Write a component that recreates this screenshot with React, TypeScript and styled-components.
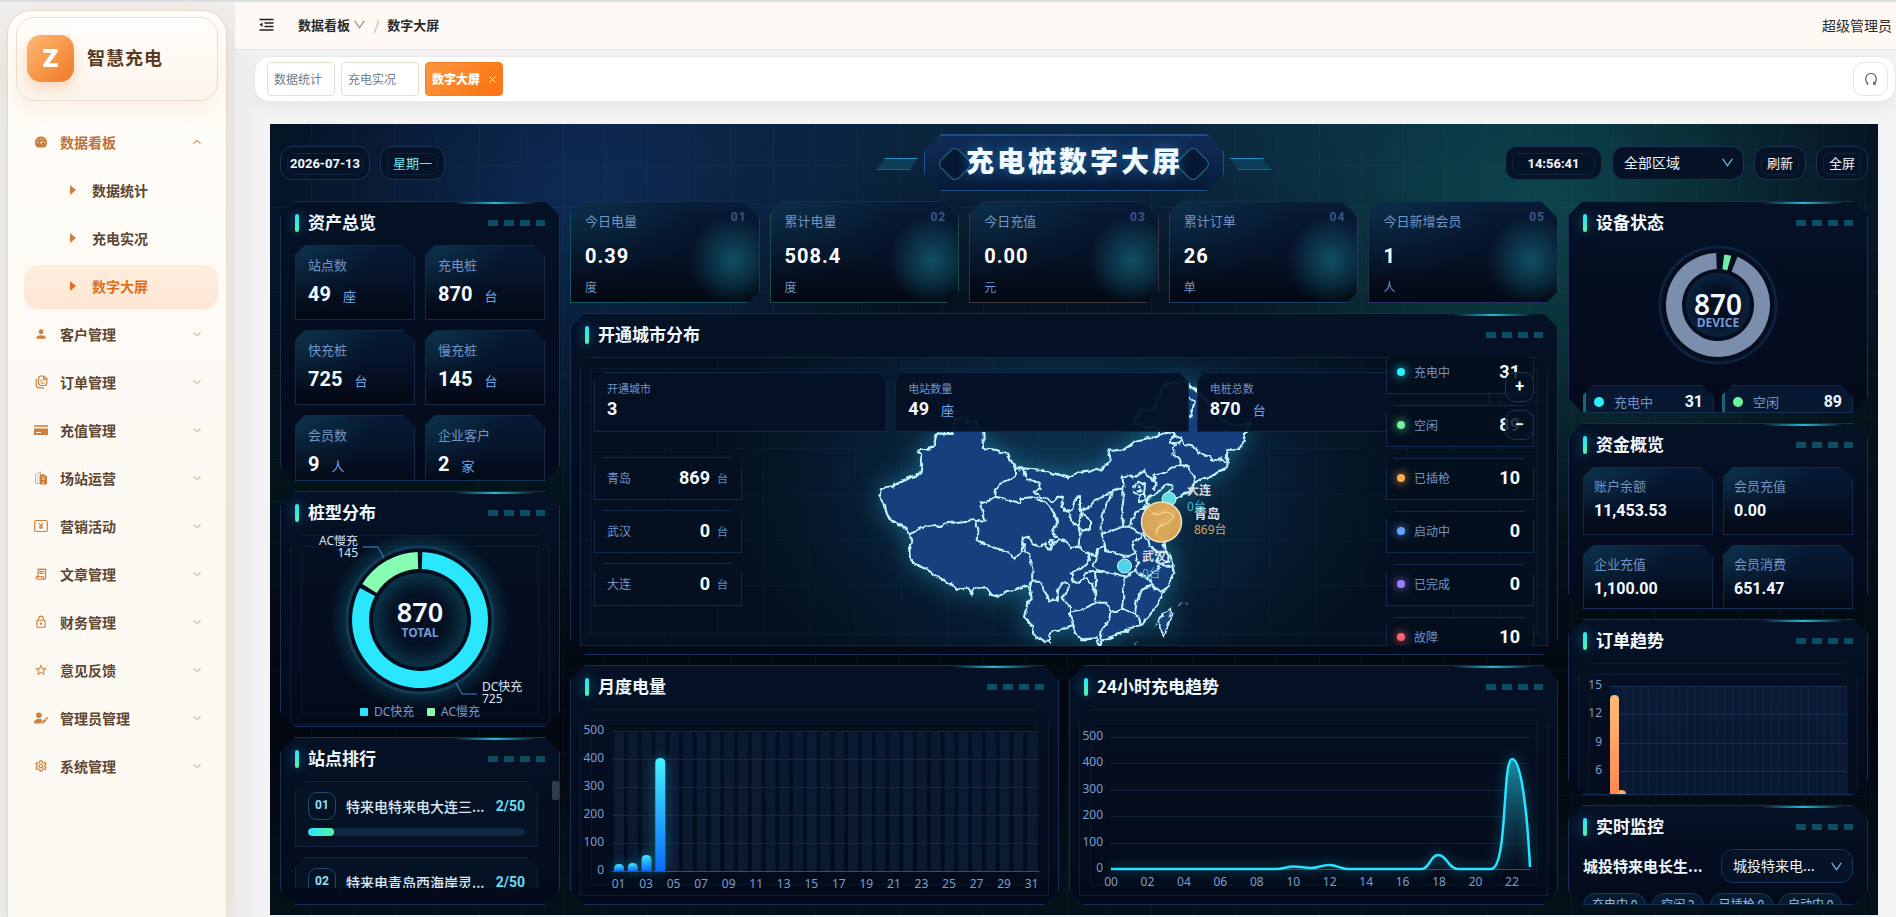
import React from "react";
import styled, { createGlobalStyle, css } from "styled-components";
import { AiFillDashboard } from "react-icons/ai";
import { MdPerson, MdOutlineReceiptLong, MdOutlineLock, MdStarBorder, MdOutlineSettings } from "react-icons/md";
import { FaUserPen } from "react-icons/fa6";

const cjk = `"Noto Sans CJK SC", sans-serif`;
const uiFont = `"Noto Sans", ${cjk}`;
const numFont = `Roboto, ${cjk}`;

const GlobalStyle = createGlobalStyle`
  * { box-sizing: border-box; }
  body { margin: 0; background: #f3f3f3; font-family: ${cjk}; font-size: 14px; }
  button, select { font: inherit; color: inherit; margin: 0; }
  h1, h2, ul, dl, dd, dt { margin: 0; padding: 0; }
  ul { list-style: none; }
  a { color: inherit; text-decoration: none; }
  svg { display: block; }
`;

/* ---------- shell ---------- */

const Shell = styled.div`
  display: flex;
  height: 100vh;
  min-height: 640px;
  overflow: hidden;
  border-top: 2px solid #dcdfdf;
`;

const Sidebar = styled.aside`
  flex: none;
  width: 235px;
  padding: 8px 8px 0 7px;
  background: linear-gradient(90deg, #f1f0ef, #f0eeec);
`;

const SideCard = styled.div`
  height: 100%;
  padding: 6px 8px 0;
  border: 1px solid #ead9c8;
  border-bottom: 0;
  border-radius: 24px 24px 0 0;
  background: linear-gradient(180deg, #fffdfa, #fcf8f2 60%);
  box-shadow: 0 12px 32px rgba(130, 90, 60, 0.14);
`;

const Brand = styled.div`
  display: flex;
  align-items: flex-start;
  gap: 13px;
  height: 84px;
  padding: 17px 10px;
  border: 1px solid #ecdccc;
  border-radius: 18px;
  background: linear-gradient(180deg, #fffdfb, #fbf5ec);
  box-shadow: 0 12px 24px rgba(240, 160, 100, 0.12);
`;

const BrandMark = styled.span`
  display: grid;
  place-items: center;
  width: 47px;
  height: 47px;
  border-radius: 14px;
  color: #fff;
  font: 900 24px/48px Inter, sans-serif;
  background: linear-gradient(135deg, #ffb873, #ee7a26);
  box-shadow: 0 6px 14px rgba(240, 130, 50, 0.28);
`;

const BrandName = styled.span`
  margin-top: 8px;
  color: #5b3a21;
  font-size: 18px;
  font-weight: 700;
  line-height: 28px;
  letter-spacing: 1px;
`;

const Menu = styled.nav`
  display: flex;
  flex-direction: column;
  gap: 4px;
  margin-top: 20px;
  padding-left: 8px;
`;

const MenuItem = styled.button<{ $open?: boolean }>`
  display: flex;
  align-items: center;
  gap: 12px;
  height: 44px;
  padding: 0 17px 2px 10px;
  border: 0;
  background: none;
  color: ${(p) => (p.$open ? "#bb7440" : "#5c4634")};
  font-weight: 600;
  line-height: 20px;
  text-align: left;
  > svg { flex: none; width: 14px; height: 14px; color: #cd7f3c; }
  > svg:last-child { width: 8px; height: 8px; margin-left: auto; color: ${(p) => (p.$open ? "#c98a5a" : "#d4b294")}; }
`;

const SubLink = styled.a<{ $active?: boolean }>`
  display: flex;
  align-items: center;
  gap: 16px;
  height: 44px;
  padding: 0 0 2px 46px;
  border-radius: 14px;
  color: ${(p) => (p.$active ? "#df6f1c" : "#5c4634")};
  font-weight: 600;
  line-height: 20px;
  background: ${(p) => (p.$active ? "linear-gradient(180deg, #ffeede, #fde6d3)" : "none")};
  &::before {
    content: "";
    border: 5px solid transparent;
    border-left: 6px solid ${(p) => (p.$active ? "#df6f1c" : "#cd7f3c")};
    border-right: 0;
  }
`;

const Main = styled.div`
  flex: 1;
  min-width: 0;
  display: flex;
  flex-direction: column;
  background: linear-gradient(90deg, #ececec, #f3f3f3 28px);
`;

const TopBar = styled.header`
  display: flex;
  align-items: center;
  height: 48px;
  padding: 0 4px 2px 24px;
  background: #fef9f5;
  border-bottom: 1px solid #e8e5e1;
  color: #2b2b2b;
`;

const IconButton = styled.button`
  display: grid;
  place-items: center;
  padding: 0;
  border: 0;
  background: none;
`;

const Crumbs = styled.nav`
  display: flex;
  align-items: center;
  margin-left: 24px;
  font-size: 13px;
  font-weight: 600;
  line-height: 20px;
  svg { margin: 0 9px 0 4px; }
  span { margin-right: 8px; color: #b9aaa0; font-weight: 400; }
`;

const UserName = styled.span`
  margin-left: auto;
  line-height: 20px;
`;

const TabBar = styled.div`
  display: flex;
  gap: 6px;
  height: 46px;
  margin: 6px 0 0 19px;
  padding: 5px 7px 5px 12px;
  border: 1px solid #ece9e5;
  border-radius: 16px;
  background: #fff;
  box-shadow: 0 6px 14px rgba(0, 0, 0, 0.05);
`;

const Tab = styled.div<{ $active?: boolean; $wide?: boolean }>`
  display: flex;
  align-items: center;
  height: 34px;
  width: ${(p) => (p.$wide ? 78 : 68)}px;
  padding: 0 6px;
  border: 1px solid ${(p) => (p.$active ? "#fb7c20" : "#eaddd2")};
  border-radius: 4px;
  color: ${(p) => (p.$active ? "#fff" : "#6f7c8c")};
  font-size: 12px;
  font-weight: ${(p) => (p.$active ? 900 : 400)};
  line-height: 18px;
  background: ${(p) => (p.$active ? "linear-gradient(135deg, #ff963f, #fa7210)" : "#fff")};
  button { margin-left: auto; }
`;

const RefreshButton = styled(IconButton)`
  width: 35px;
  height: 34px;
  margin-left: auto;
  border: 1px solid #ebe5de;
  border-radius: 10px;
  color: #59616c;
`;

/* ---------- data screen ---------- */

const Screen = styled.main`
  flex: 1;
  min-height: 0;
  display: flex;
  flex-direction: column;
  gap: 10px;
  margin: 22px 18px 2px 35px;
  padding: 10px;
  color: #eaf6ff;
  background:
    repeating-linear-gradient(90deg, transparent 0 41px, rgba(90, 160, 220, 0.05) 41px 42px),
    repeating-linear-gradient(180deg, transparent 0 41px, rgba(90, 160, 220, 0.04) 41px 42px),
    radial-gradient(ellipse 360px 300px at 19% 10%, rgba(18, 56, 116, 0.6), transparent),
    radial-gradient(ellipse 380px 330px at 79% 11%, rgba(16, 90, 92, 0.7), transparent),
    radial-gradient(ellipse 700px 190px at 50% 0%, rgba(16, 60, 96, 0.6), transparent),
    linear-gradient(180deg, #05101f, #04131a 45%, #02060f 75%, #03121a);
`;

const ScreenHead = styled.header`
  display: grid;
  grid-template-columns: 1fr auto 1fr;
  align-items: center;
  height: 57px;
`;

const PillRow = styled.div<{ $end?: boolean }>`
  display: flex;
  gap: 10px;
  justify-content: ${(p) => (p.$end ? "flex-end" : "flex-start")};
`;

const pillBox = css`
  height: 34px;
  border: 1px solid #1a335c;
  border-radius: 12px;
  background: #061225;
`;

const Pill = styled.span<{ $w: number; $accent?: boolean }>`
  ${pillBox}
  width: ${(p) => p.$w}px;
  padding: 6px;
  color: ${(p) => (p.$accent ? "#6ce8f5" : "#f2f8ff")};
  font: ${(p) => (p.$accent ? 400 : 700)} 13px/16px ${numFont};
  text-align: center;
  &::before {
    content: "";
    display: block;
    height: 20px;
    margin-bottom: -19px;
    border: 1px solid rgba(40, 80, 130, 0.28);
    border-radius: 7px;
  }
`;

const PillButton = styled(Pill).attrs({ as: "button", type: "button" })`
  font-weight: 400;
`;

const SelectBox = styled.label<{ $w: number }>`
  display: grid;
  align-items: center;
  width: ${(p) => p.$w}px;
  > * { grid-area: 1 / 1; }
  > svg { justify-self: end; margin-right: 11px; pointer-events: none; color: #7fc2f2; }
`;

const Select = styled.select`
  ${pillBox}
  width: 100%;
  padding: 0 28px 2px 11px;
  appearance: none;
  color: #eaf4ff;
  font-size: 14px;
`;

const TitleWrap = styled.div`
  position: relative;
  &::before, &::after {
    content: "";
    position: absolute;
    top: 24px;
    width: 42px;
    height: 10px;
    border-top: 1px solid #2a8fc0;
    border-bottom: 1px solid #1a5f78;
    background: #0c3c56;
  }
  &::before { left: -48px; clip-path: polygon(9px 0, 100% 0, 34px 100%, 0 100%); }
  &::after { right: -48px; clip-path: polygon(0 0, 33px 0, 100% 100%, 8px 100%); }
`;

const Title = styled.h1`
  position: relative;
  z-index: 0;
  height: 57px;
  padding: 0 40px 0 41px;
  border: 1px solid #1f4f8c;
  border-top: 2px solid #234a80;
  clip-path: polygon(17px 0, calc(100% - 17px) 0, 100% 17px, 100% calc(100% - 17px), calc(100% - 17px) 100%, 17px 100%, 0 calc(100% - 17px), 0 17px);
  background: linear-gradient(180deg, #112c56, #0a2246 60%, #081a38);
  color: #f1f8ff;
  font-size: 28px;
  font-weight: 900;
  line-height: 48px;
  letter-spacing: 3px;
  text-shadow: 0 0 14px rgba(40, 160, 230, 0.6);
  &::before, &::after {
    content: "";
    position: absolute;
    z-index: -1;
    top: 15px;
    width: 24px;
    height: 24px;
    border: 1px solid #236f90;
    border-radius: 6px;
    background: #061832;
    transform: rotate(45deg);
  }
  &::before { left: 17px; }
  &::after { right: 17px; }
`;

const Board = styled.div`
  flex: 1;
  min-height: 0;
  display: grid;
  grid-template-columns: 280px minmax(0, 1fr) 300px;
  gap: 10px;
`;

const Column = styled.div<{ $rows: string }>`
  display: grid;
  grid-template-columns: minmax(0, 1fr);
  grid-template-rows: ${(p) => p.$rows};
  gap: 10px;
  min-height: 0;
`;

const Pair = styled.div`
  display: grid;
  grid-template-columns: 1fr 1fr;
  gap: 10px;
  min-height: 0;
`;

const PanelBox = styled.section`
  position: relative;
  display: flex;
  flex-direction: column;
  min-width: 0;
  min-height: 0;
  padding: 12px 14px 8px;
  overflow: hidden;
  border: 1px solid #182f55;
  clip-path: polygon(15px 0, calc(100% - 15px) 0, 100% 15px, 100% calc(100% - 15px), calc(100% - 15px) 100%, 15px 100%, 0 calc(100% - 15px), 0 15px);
  background: linear-gradient(180deg, #051226, #040d20 50%, #030a1a);
  &::before {
    content: "";
    position: absolute;
    top: 0;
    right: 23px;
    width: 82px;
    height: 2px;
    background: linear-gradient(90deg, transparent, #26b8d4, transparent);
  }
`;

const PanelHead = styled.div`
  flex: none;
  display: flex;
  align-items: center;
  height: 18px;
  margin-bottom: 13px;
  &::before {
    content: "";
    width: 4px;
    height: 18px;
    margin-right: 9px;
    border-radius: 2px;
    background: linear-gradient(180deg, #27e3ff, #55f5a6);
    box-shadow: 0 0 12px rgba(39, 190, 255, 0.6);
  }
  &::after {
    content: "";
    width: 57px;
    height: 6px;
    margin-left: auto;
    background: repeating-linear-gradient(90deg, #0f4d63 0 10px, transparent 10px 16px);
  }
`;

const PanelTitle = styled.h2`
  padding-bottom: 3px;
  color: #f2f9ff;
  font-size: 17px;
  font-weight: 700;
  line-height: 18px;
`;

const cardSkin = css`
  border: 1px solid #12294a;
  clip-path: polygon(10px 0, calc(100% - 12px) 0, 100% 12px, 100% 100%, 0 100%, 0 10px);
  background:
    radial-gradient(ellipse 70% 80% at 0 0, rgba(16, 66, 88, 0.6), transparent),
    linear-gradient(180deg, #071a36, #050f22 62%, #030913);
`;

const CardGrid = styled.div<{ $row: number; $gap: number }>`
  display: grid;
  grid-template-columns: 1fr 1fr;
  grid-auto-rows: ${(p) => p.$row}px;
  gap: ${(p) => p.$gap}px;
`;

const Card = styled.div`
  ${cardSkin}
  padding: 10px 12px;
`;

const FundCard = styled(Card)`
  padding: 9px 10px;
`;

const Label = styled.div<{ $size?: number }>`
  color: #7394c4;
  font-size: ${(p) => p.$size || 13}px;
  line-height: 18px;
`;

const Value = styled.div<{ $size: number; $top: number }>`
  display: flex;
  align-items: baseline;
  gap: 12px;
  margin-top: ${(p) => p.$top}px;
  color: #f4faff;
  font: 700 ${(p) => p.$size}px/24px ${numFont};
`;

const Unit = styled.small`
  color: #6fa8e6;
  font: 400 13px/18px ${cjk};
`;

const ChartBox = styled.div<{ $h?: number }>`
  position: relative;
  flex: ${(p) => (p.$h ? "none" : "1")};
  height: ${(p) => (p.$h ? p.$h + "px" : "auto")};
  min-height: 0;
  margin: 0 -5px;
  overflow: hidden;
  box-shadow: inset 0 0 0 1px #0b1c34;
  clip-path: polygon(12px 0, calc(100% - 12px) 0, 100% 14px, 100% 100%, 0 100%, 0 12px);
  background: linear-gradient(180deg, #051023, #030b1a);
  &::before {
    content: "";
    position: absolute;
    inset: 11px;
    border: 1px solid rgba(40, 80, 120, 0.16);
  }
  > svg { position: relative; }
`;

const Chart = styled.svg`
  width: 100%;
  height: 100%;
  font: 12px ${uiFont};
  fill: #7f9dcc;
`;

/* ---------- KPI strip ---------- */

const KpiRow = styled.div`
  display: grid;
  grid-template-columns: repeat(5, 1fr);
  grid-template-rows: minmax(0, 1fr);
  gap: 10px;
  min-height: 0;
`;

const Kpi = styled.div<{ $c: string; $glow: string }>`
  position: relative;
  padding: 10px 14px 0;
  border: 1px solid ${(p) => p.$c};
  border-top-color: #14304a;
  clip-path: polygon(13px 0, calc(100% - 17px) 0, 100% 17px, 100% calc(100% - 12px), calc(100% - 12px) 100%, 0 100%, 0 13px);
  background:
    radial-gradient(circle 44px at calc(100% - 26px) 58px, ${(p) => p.$glow}, transparent),
    radial-gradient(ellipse 70% 80% at 0 0, rgba(16, 66, 88, 0.5), transparent),
    linear-gradient(180deg, #081b38, #051024 60%, #030913);
`;

const KpiIndex = styled.span`
  position: absolute;
  top: 6px;
  right: 12px;
  color: #3b5780;
  font: 700 12px/18px ${numFont};
  letter-spacing: 1px;
`;

const KpiValue = styled.div`
  margin: 14px 0 10px;
  color: #fff;
  font: 700 20px/24px ${numFont};
  letter-spacing: 1px;
`;

/* ---------- ranking ---------- */

const RankScroll = styled.div`
  flex: 1;
  display: flex;
  justify-content: space-between;
  min-height: 0;
  margin: 0 -14px 8px 0;
  overflow: hidden;
`;

const RankList = styled.ul`
  flex: none;
  display: grid;
  gap: 10px;
  width: calc(100% - 21px);
  grid-auto-rows: 66px;
`;

const Thumb = styled.span`
  width: 7px;
  height: 19px;
  border-radius: 2px;
  background: #343b48;
`;

const RankItem = styled.li`
  padding: 10px 12px;
  border: 1px solid #0e2340;
  clip-path: polygon(10px 0, calc(100% - 11px) 0, 100% 11px, 100% 100%, 0 100%, 0 10px);
  background: #051224;
`;

const RankLine = styled.div`
  display: flex;
  align-items: center;
  margin-bottom: 8px;
  font-weight: 500;
  line-height: 26px;
  color: #dfeaf8;
`;

const Badge = styled.span`
  width: 28px;
  height: 28px;
  margin-right: 10px;
  border: 1px solid #174a6c;
  border-radius: 9px;
  color: #8fe3f5;
  font: 700 12px/24px ${numFont};
  text-align: center;
`;

const Ratio = styled.span`
  margin-left: auto;
  color: #66dcf0;
  font: 700 14px/26px ${numFont};
`;

const Track = styled.div`
  height: 8px;
  border-radius: 4px;
  background: #10283f;
  overflow: hidden;
`;

const Fill = styled.div`
  height: 100%;
  border-radius: 4px;
  background: linear-gradient(90deg, #27e3ff, #55f5a6);
`;

/* ---------- map ---------- */

const Stage = styled(ChartBox)`
  box-shadow: inset 0 0 0 1px #102744;
  background:
    repeating-linear-gradient(90deg, transparent 0 45px, rgba(80, 150, 220, 0.04) 45px 46px),
    repeating-linear-gradient(180deg, transparent 0 45px, rgba(80, 150, 220, 0.04) 45px 46px),
    radial-gradient(ellipse 340px 250px at 50% 40%, rgba(16, 68, 106, 0.65), transparent),
    #04101f;
`;

const MapSvg = styled(Chart)`
  position: absolute !important;
  inset: 0;
`;

const StageStats = styled.div`
  position: absolute;
  top: 15px;
  left: 14px;
  right: 58px;
  display: grid;
  grid-template-columns: repeat(3, 1fr);
  gap: 8px;
`;

const glass = css`
  border: 1px solid #11294a;
  clip-path: polygon(9px 0, calc(100% - 10px) 0, 100% 10px, 100% 100%, 0 100%, 0 9px);
`;

const StageStat = styled.div`
  ${glass}
  height: 60px;
  padding: 6px 12px;
  background: rgba(5, 17, 37, 0.95);
`;

const CityList = styled.ul`
  position: absolute;
  top: 100px;
  left: 14px;
  display: grid;
  grid-auto-rows: 43px;
  gap: 10px;
  width: 148px;
`;

const CityRow = styled.li`
  ${glass}
  display: flex;
  align-items: center;
  gap: 7px;
  padding: 0 13px 2px 12px;
  background: #041020;
  b { margin-left: auto; font: 700 18px/24px ${numFont}; color: #f4faff; }
  small { color: #5f8fca; font-size: 11px; line-height: 18px; }
`;

const StateList = styled.ul`
  position: absolute;
  top: -5px;
  right: 14px;
  display: grid;
  grid-auto-rows: 42px;
  gap: 11px;
  width: 148px;
`;

const StateRow = styled(CityRow)`
  gap: 9px;
  padding-left: 10px;
  background: #040f1e;
`;

const Dot = styled.i<{ $c: string }>`
  width: 8px;
  height: 8px;
  border-radius: 50%;
  background: ${(p) => p.$c};
  box-shadow: 0 0 10px ${(p) => p.$c};
`;

const Zoomer = styled.div`
  position: absolute;
  top: 15px;
  right: 14px;
  display: grid;
  gap: 8px;
`;

const ZoomButton = styled.button`
  width: 29px;
  height: 30px;
  padding: 0;
  border: 1px solid #1a3558;
  border-radius: 10px;
  background: rgba(5, 17, 35, 0.86);
  color: #f4faff;
  font: 700 16px/28px ${numFont};
`;

/* ---------- right column ---------- */

const DonutArea = styled.div`
  flex: none;
  height: 130px;
  margin-bottom: 10px;
`;

const DeviceCard = styled(Card)`
  display: flex;
  align-items: center;
  gap: 10px;
  padding: 0 10px 2px 8px;
  border-left: 3px solid #18647a;
  background: #071830;
  b { margin-left: auto; font: 700 16px/20px ${numFont}; }
`;

const BigDot = styled(Dot)`
  width: 10px;
  height: 10px;
  box-shadow: none;
`;

const MonitorRow = styled.div`
  flex: none;
  display: flex;
  align-items: center;
  justify-content: space-between;
  margin-bottom: 10px;
  font-size: 15px;
  line-height: 20px;
`;

const TagRow = styled.div`
  display: flex;
  gap: 6px;
`;

const Tag = styled.span`
  flex: none;
  height: 24px;
  padding: 0 8px;
  border: 1px solid #16395c;
  border-radius: 12px;
  background: #071a30;
  color: #8ec6ea;
  font-size: 12px;
  line-height: 20px;
`;

/* ---------- icons ---------- */

const Chevron = ({ up, size = 10 }: { up?: boolean; size?: number }) => (
  <svg width={size} height={size} viewBox="0 0 10 10" fill="none" stroke="currentColor">
    <path d={up ? "M0.5 7 5 3l4.500 4" : "M0.5 3 5 7l4.500-4"} strokeWidth="1.300" />
  </svg>
);

const DeepChevron = ({ size = 11, color = "currentColor" }: { size?: number; color?: string }) => (
  <svg width={size} height={size} viewBox="0 0 11 11" fill="none" stroke={color}>
    <path d="M0.7 1.800 5.500 8.800l4.800-7" strokeWidth="1.200" />
  </svg>
);

const DocsIcon = () => (
  <svg viewBox="0 0 14 14" fill="none" stroke="currentColor" strokeWidth="1.200">
    <path d="M4.500 4q0-3 3-3h2.500l2.800 2.800v4.200q0 2.500-2.500 2.500H7q-2.500 0-2.500-2.500z" />
    <path d="M2.200 4v6q0 2.800 2.800 2.800h5M6.500 5.700h2M6.500 8h4.200M9.500 1.500v2.800h3" />
  </svg>
);

const CardIcon = () => (
  <svg viewBox="0 0 14 14" fill="currentColor">
    <path d="M0 2h14v2H0z" opacity=".8" />
    <path d="M0 5.500h14V12H0zM2 9v1h5V9z" fillRule="evenodd" />
  </svg>
);

const BuildingIcon = () => (
  <svg viewBox="0 0 14 14" fill="none" stroke="currentColor">
    <path d="M5 12.500H1.500v-9L6.500 1v3M3.500 5v1M3.500 7.500v1M3.500 10v1" strokeWidth=".9" opacity=".7" />
    <path d="M6 4.500l3-1 3.500 2v7.500H6z" fill="currentColor" />
    <path d="M8 6.500h2.500M8 8.500h2.500M9.200 10.500v2.500" stroke="#fdf7ef" strokeWidth=".8" />
  </svg>
);

const YuanIcon = () => (
  <svg viewBox="0 0 14 14" fill="none" stroke="currentColor">
    <rect x=".7" y="1.500" width="12.600" height="11" rx="1.500" strokeWidth="1.200" />
    <path d="M4.800 4 7 6.500 9.200 4M7 6.500V10M4.800 7h4.400M4.800 8.700h4.400" strokeWidth="1.100" />
  </svg>
);

const FoldIcon = () => (
  <svg width="15" height="14" viewBox="0 0 15 14" fill="none" stroke="#222" strokeWidth="1.300">
    <path d="M.5 1.500h14M5.500 5h9M5.500 8.500h9M.5 12h14" />
    <path d="M.5 6.800 3.500 4.600v4.400z" fill="#222" stroke="none" />
  </svg>
);

const ReloadIcon = () => (
  <svg width="14" height="14" viewBox="0 0 14 14" fill="none" stroke="currentColor" strokeWidth="1.200">
    <path d="M4 12.200H2.500M4.300 12C.2 9 1.200 1.500 7 1.500S13.800 9 9.700 12M9.700 9.800v2.400h2.300" />
  </svg>
);

/* ---------- drawing helpers ---------- */

const polar = (cx: number, cy: number, r: number, deg: number) => {
  const a = ((deg - 90) * Math.PI) / 180;
  return `${(cx + r * Math.cos(a)).toFixed(2)} ${(cy + r * Math.sin(a)).toFixed(2)}`;
};

const ring = (cx: number, cy: number, r1: number, r2: number, from: number, to: number) => {
  const big = to - from > 180 ? 1 : 0;
  return `M${polar(cx, cy, r2, from)}A${r2} ${r2} 0 ${big} 1 ${polar(cx, cy, r2, to)}L${polar(cx, cy, r1, to)}A${r1} ${r1} 0 ${big} 0 ${polar(cx, cy, r1, from)}Z`;
};

const roundTop = (x: number, top: number, w: number, bottom: number) => {
  const r = Math.min(w / 2, bottom - top);
  return `M${x} ${bottom}V${top + r}Q${x} ${top} ${x + w / 2} ${top}Q${x + w} ${top} ${x + w} ${top + r}V${bottom}Z`;
};

const pad = (n: number) => String(n).padStart(2, "0");

/* ---------- charts ---------- */

const PileDonut = () => (
  <Chart viewBox="290 535 260 190">
    <defs>
      <radialGradient id="coreA"><stop offset=".55" stopColor="#051023" /><stop offset="1" stopColor="#0a3346" /></radialGradient>
      <radialGradient id="haloA"><stop offset=".8" stopColor="#12708c" stopOpacity=".32" /><stop offset="1" stopColor="#12708c" stopOpacity="0" /></radialGradient>
    </defs>
    <circle cx="420" cy="620" r="90" fill="url(#haloA)" />
    <circle cx="420" cy="620" r="73" fill="#040e1e" stroke="#103d54" strokeWidth="3" />
    <circle cx="420" cy="620" r="47" fill="url(#coreA)" />
    <path d={ring(420, 620, 51, 68, 2, 298)} fill="#2ae7ff" />
    <path d={ring(420, 620, 51, 68, 302, 358)} fill="#86fdb0" />
    <path d="M384 558l-6-11h-15" fill="none" stroke="#3f86d8" />
    <path d="M456 683l6 11h15" fill="none" stroke="#3f86d8" />
    <g fill="#dbe7f6">
      <text x="358" y="545" textAnchor="end">AC慢充</text>
      <text x="358" y="557" textAnchor="end">145</text>
      <text x="482" y="691">DC快充</text>
      <text x="482" y="703">725</text>
    </g>
    <text x="420" y="622" textAnchor="middle" fontSize="27" fontWeight="600" fill="#f4faff">870</text>
    <text x="420" y="637" textAnchor="middle" fontWeight="700" fill="#7799d2">TOTAL</text>
    <rect x="360" y="708" width="8" height="8" rx="1" fill="#2ae7ff" />
    <text x="374" y="716">DC快充</text>
    <rect x="427" y="708" width="8" height="8" rx="1" fill="#86fdb0" />
    <text x="441" y="716">AC慢充</text>
  </Chart>
);

const DeviceDonut = () => (
  <Chart viewBox="1583 245 270 130">
    <defs>
      <radialGradient id="coreB"><stop offset=".5" stopColor="#051023" /><stop offset="1" stopColor="#0a2340" /></radialGradient>
    </defs>
    <circle cx="1718" cy="305" r="58" fill="#040e1f" stroke="#0c2340" strokeWidth="3" />
    <circle cx="1718" cy="305" r="32" fill="url(#coreB)" />
    <path d={ring(1718, 305, 36, 52, 22, 358)} fill="#7b8eac" />
    <path d={ring(1718, 305, 36, 51, 7, 15)} fill="#6ff0a2" />
    <text x="1718" y="315" textAnchor="middle" fontSize="28" fontWeight="600" fill="#f4faff">870</text>
    <text x="1718" y="327" textAnchor="middle" fontWeight="700" fill="#7799d2">DEVICE</text>
  </Chart>
);

const MonthBars = () => {
  const tops = [864, 863, 855, 758];
  return (
    <Chart viewBox="580 709 469 187">
      <defs>
        <linearGradient id="blueBar" x1="0" y1="0" x2="0" y2="1"><stop stopColor="#46f1ff" /><stop offset="1" stopColor="#0b6bff" /></linearGradient>
      </defs>
      {Array.from({ length: 31 }, (_, i) => (
        <path key={i} d={roundTop(614 + i * 13.77, 731, 10, 871)} fill="#0b1a30" />
      ))}
      {[500, 400, 300, 200, 100, 0].map((v, i) => (
        <g key={v}>
          <path d={`M612 ${731.5 + i * 28}H1039`} stroke={v ? "#16283f" : "#34506e"} />
          <text x="604" y={734 + i * 28} textAnchor="end">{v}</text>
        </g>
      ))}
      {tops.map((t, i) => (
        <path key={i} d={roundTop(614 + i * 13.77, t, 10, 871)} fill="url(#blueBar)" style={{ filter: "drop-shadow(0 0 6px #0e7090)" }} />
      ))}
      {Array.from({ length: 16 }, (_, i) => (
        <text key={i} x={618.500 + i * 27.54} y="888" textAnchor="middle">{pad(i * 2 + 1)}</text>
      ))}
    </Chart>
  );
};

const curve =
  "M1111 869H1276C1282 869 1288 866.500 1293 866.500C1301 866.500 1304 868 1311 868C1318 868 1322 865 1329 865C1338 865 1340 869 1348 869H1421C1430 869 1430 855 1438.500 855C1447 855 1448 869 1458 869H1491C1508 869 1502 759 1512 759C1521 759 1527 810 1530 867";

const HourTrend = () => (
  <Chart viewBox="1079 709 469 187">
    <defs>
      <linearGradient id="area" x1="0" y1="0" x2="0" y2="1"><stop stopColor="#1c8ea4" /><stop offset="1" stopColor="#0a2c3e" stopOpacity=".2" /></linearGradient>
    </defs>
    {[500, 400, 300, 200, 100, 0].map((v, i) => (
      <g key={v}>
        <path d={`M1111 ${Math.round(737 + i * 26.4) + 0.5}H1530`} stroke={v ? "#13233a" : "#34506e"} />
        <text x="1103" y={Math.round(740 + i * 26.4)} textAnchor="end">{v}</text>
      </g>
    ))}
    <path d={curve + "V869H1111Z"} fill="url(#area)" />
    <path d={curve} fill="none" stroke="#27e3ff" strokeWidth="2.500" style={{ filter: "drop-shadow(0 0 6px #12809c)" }} />
    {Array.from({ length: 12 }, (_, i) => (
      <text key={i} x={1111 + i * 36.45} y="886" textAnchor="middle">{pad(i * 2)}</text>
    ))}
  </Chart>
);

const OrderBars = () => (
  <Chart viewBox="1578 663 280 190" preserveAspectRatio="xMidYMin meet">
    <defs>
      <linearGradient id="orangeBar" x1="0" y1="0" x2="0" y2="1"><stop stopColor="#ffbd73" /><stop offset="1" stopColor="#ff7746" /></linearGradient>
    </defs>
    {Array.from({ length: 31 }, (_, i) => (
      <rect key={i} x={1610 + i * 7.62} y="686" width="9.200" height="142" rx="4" fill="#1c4070" fillOpacity=".24" />
    ))}
    {[15, 12, 9, 6].map((v, i) => (
      <g key={v}>
        <path d={`M1610 ${Math.round(686 + i * 28.4) + 0.5}H1846`} stroke="#182e4a" />
        <text x="1602" y={Math.round(689 + i * 28.4)} textAnchor="end">{v}</text>
      </g>
    ))}
    <path d={roundTop(1610, 695, 9, 828)} fill="url(#orangeBar)" />
    <path d={roundTop(1617, 790, 9, 828)} fill="#ffb066" />
  </Chart>
);

const land =
  "M118 350L122 332 137 320 160 320 168 310 190 305 215 290 240 280 247 250 244 228 235 212 280 203 290 160 335 162 345 118 365 112 385 125 405 122 420 150 430 160 432 205 470 210 505 225 525 265 548 265 610 270 640 280 685 292 720 275 785 268 812 240 805 212 850 210 893 180 955 170 960 150 935 142 880 130 900 90 940 90 960 50 970 15 1010 5 1046 12 1071 35 1100 60 1110 90 1150 120 1190 140 1232 128 1215 160 1210 185 1195 210 1162 208 1158 225 1165 240 1160 265 1145 268 1125 280 1115 290 1090 295 1065 305 1055 325 1040 340 1010 355 985 360 975 347 990 332 998 318 985 312 960 328 945 345 930 352 915 365 930 378 905 385 950 400 965 392 985 385 1005 395 1000 408 980 415 960 440 945 455 955 465 970 485 975 510 992 530 998 560 1000 575 995 600 980 625 960 650 950 680 925 710 905 735 870 745 845 758 815 770 785 785 780 800 770 785 770 775 725 778 705 760 700 735 660 748 635 755 628 765 630 785 615 785 605 778 585 770 578 740 560 718 552 710 560 680 575 655 570 625 550 618 520 630 500 633 475 650 455 645 440 625 400 625 395 640 385 625 355 630 330 612 290 590 265 570 230 555 210 540 208 512 215 490 210 465 200 445 175 432 150 420 140 400 135 375Z";

const borders = [
  "M210 465L245 440 300 438 320 430 360 425 405 420",
  "M525 265L525 290 480 310 468 330 465 350 440 365 420 370 430 400 438 425 405 422 412 450 410 480 430 492 465 502 500 515 525 535 545 515 548 475 565 470 578 490 600 500 615 490 630 512 635 495 625 485 640 480 640 495",
  "M465 350L505 360 540 370 545 355 575 352 600 358 635 385 645 405 652 430 640 450 645 470 660 480 640 490",
  "M548 265L560 295 575 300 600 310 602 325 580 332 600 350 640 365 655 350 672 355 665 380 685 395 700 430 715 440 720 460 715 500 690 505 680 485 660 480",
  "M672 392L695 390 705 360 720 348 720 380 725 400 750 420 750 445 730 455 715 440 720 415 725 400",
  "M725 390L745 385 765 360 790 350 820 330 850 322",
  "M820 330L800 370 785 405 785 465",
  "M715 500L745 520 770 530 775 505 795 495 785 465",
  "M850 322L850 360 845 400 850 440 810 455 785 465",
  "M850 322L848 290 870 285 880 295 915 272 925 290 945 300 940 285 975 275 1000 262 1025 255",
  "M880 325L895 305 915 315 912 340 895 345 878 335M912 340L918 360 900 365 898 345M895 320L905 330 890 335",
  "M925 290L950 310 940 330",
  "M1025 255L1045 260 1060 290 1065 305",
  "M1025 255L1018 235 1000 225 1000 200 1010 190 990 188 1005 160",
  "M1025 175L1035 195 1065 200 1080 220 1110 230 1120 245 1145 235 1158 250",
  "M955 165L1000 155 1005 170 1025 175 1015 195M1046 12L1071 35M1048 55L1065 65 1058 85 1050 115",
  "M920 375L895 390 875 415 870 440 850 440",
  "M870 440L895 460 905 470 880 490 885 520 860 530 830 520 795 510 795 495",
  "M905 460L925 480 930 500 960 520 950 545 975 560 995 560M960 520L985 520 985 545 965 550M935 510L950 520",
  "M885 520L895 550 880 575 925 590 950 570 965 550",
  "M770 530L760 555 780 575 820 580 860 590 880 575",
  "M745 520L750 540 725 565 695 580 700 605 725 605 735 580 760 575 780 575",
  "M548 475L555 510 570 530 578 570 575 605 570 625",
  "M575 605L600 605 620 645 630 665 650 660 655 625 672 605 690 620",
  "M690 620L675 645 665 655 690 680 690 710 700 735",
  "M695 610L740 595 755 610 765 640 770 665 745 680 715 690 690 695",
  "M765 575L768 610 765 640 770 665 800 665 810 695 845 690 850 660 848 620 855 590",
  "M810 695L808 720 785 750 780 785",
  "M845 685L885 700 895 710 905 735",
  "M885 700L890 665 905 630 935 615 925 590M925 590L935 615 960 635 975 628",
].join("");

const taiwan = "M990 685L995 700 985 735 972 768 960 745 958 720 970 700Z";

const ChinaMap = () => (
  <MapSvg viewBox="580 357 968 289" preserveAspectRatio="xMidYMid slice">
    <defs>
      <filter id="coast" x="-10%" y="-10%" width="120%" height="120%">
        <feTurbulence type="fractalNoise" baseFrequency=".16" numOctaves="2" seed="4" />
        <feDisplacementMap in="SourceGraphic" scale="5" xChannelSelector="R" yChannelSelector="G" />
      </filter>
      <radialGradient id="pin"><stop offset="0" stopColor="#e8b45e" /><stop offset="1" stopColor="#e0a855" /></radialGradient>
    </defs>
    <g style={{ filter: "drop-shadow(0 0 12px rgba(32, 140, 180, 0.6))" }}>
      <g filter="url(#coast)">
        <g transform="translate(840 380) scale(.33333)" stroke="#c2f5ff" strokeWidth="6.500" strokeLinejoin="round">
          <path d={land} fill="#173f7d" />
          <path d={taiwan} fill="#173f7d" strokeWidth="5" />
          <path d={borders} fill="none" strokeWidth="6" />
          <path d="M1018 675l8-4M1036 672l8 2M944 738l8-6M880 790l10-2M996 555l10 2M998 572l8-2" strokeWidth="2" />
        </g>
      </g>
    </g>
    <g stroke="#d8f6ee">
      <circle cx="1169" cy="499" r="7" fill="#5fdfe4" />
      <circle cx="1124.500" cy="566" r="7" fill="#4fd3ea" />
      <circle cx="1161.500" cy="522" r="20" fill="url(#pin)" fillOpacity=".95" stroke="#f3e2bd" strokeWidth="1.500" />
    </g>
    <path d="M1152 513q6 3 10 0t12 3q-4 7-11 9t-6 8" fill="none" stroke="#f2cf8a" strokeWidth="1.500" />
    <g fill="#d9dde2" fontWeight="600">
      <text x="1187" y="495">大连</text>
      <text x="1194" y="518" fontSize="13">青岛</text>
      <text x="1142" y="561">武汉</text>
    </g>
    <g fill="#45bdd4">
      <text x="1187" y="511">0台</text>
      <text x="1142" y="578">0台</text>
    </g>
    <text x="1194" y="534" fill="#d9a55c">869台</text>
  </MapSvg>
);

/* ---------- data ---------- */

const menu = [
  ["客户管理", MdPerson], ["订单管理", DocsIcon], ["充值管理", CardIcon], ["场站运营", BuildingIcon],
  ["营销活动", YuanIcon], ["文章管理", MdOutlineReceiptLong], ["财务管理", MdOutlineLock], ["意见反馈", MdStarBorder],
  ["管理员管理", FaUserPen], ["系统管理", MdOutlineSettings],
] as [string, React.ComponentType][];

const assets = [
  ["站点数", "49", "座"], ["充电桩", "870", "台"], ["快充桩", "725", "台"],
  ["慢充桩", "145", "台"], ["会员数", "9", "人"], ["企业客户", "2", "家"],
];

const kpis = [
  ["今日电量", "0.39", "度", "#115463", "#104f64"],
  ["累计电量", "508.4", "度", "#1d4c49", "#104f64"],
  ["今日充值", "0.00", "元", "#433a3f", "#104f64"],
  ["累计订单", "26", "单", "#1a3c6c", "#104f64"],
  ["今日新增会员", "1", "人", "#2c2f66", "#104f64"],
];

const states = [
  ["充电中", "31", "#27f0ff"], ["空闲", "89", "#6df59a"], ["已插枪", "10", "#ffae4d"],
  ["启动中", "0", "#62a3ff"], ["已完成", "0", "#9a82ff"], ["故障", "10", "#ff6371"],
];

const funds = [["账户余额", "11,453.53"], ["会员充值", "0.00"], ["企业充值", "1,100.00"], ["会员消费", "651.47"]];

const Panel = ({ title, children }: { title: string; children: React.ReactNode }) => (
  <PanelBox>
    <PanelHead><PanelTitle>{title}</PanelTitle></PanelHead>
    {children}
  </PanelBox>
);

/* ---------- page ---------- */

export default function App() {
  return (
    <>
      <GlobalStyle />
      <Shell>
        <Sidebar>
          <SideCard>
            <Brand>
              <BrandMark>Z</BrandMark>
              <BrandName>智慧充电</BrandName>
            </Brand>
            <Menu>
              <MenuItem type="button" $open><AiFillDashboard />数据看板<Chevron up /></MenuItem>
              <SubLink href="#stats">数据统计</SubLink>
              <SubLink href="#live">充电实况</SubLink>
              <SubLink href="#screen" $active>数字大屏</SubLink>
              {menu.map(([name, Icon]) => (
                <MenuItem type="button" key={name}><Icon />{name}<Chevron /></MenuItem>
              ))}
            </Menu>
          </SideCard>
        </Sidebar>

        <Main>
          <TopBar>
            <IconButton type="button" aria-label="折叠菜单"><FoldIcon /></IconButton>
            <Crumbs>
              <a href="#board">数据看板</a>
              <DeepChevron color="#9b8a7e" />
              <span>/</span>
              <a href="#screen">数字大屏</a>
            </Crumbs>
            <UserName>超级管理员</UserName>
          </TopBar>
          <TabBar>
            <Tab><a href="#stats">数据统计</a></Tab>
            <Tab $wide><a href="#live">充电实况</a></Tab>
            <Tab $wide $active>
              <a href="#screen">数字大屏</a>
              <IconButton type="button" aria-label="关闭">
                <svg width="7" height="7" viewBox="0 0 7 7" stroke="#fff"><path d="M.5.5l6 6M6.500.5l-6 6" /></svg>
              </IconButton>
            </Tab>
            <RefreshButton type="button" aria-label="重新加载"><ReloadIcon /></RefreshButton>
          </TabBar>

          <Screen>
            <ScreenHead>
              <PillRow>
                <Pill $w={90}>2026-07-13</Pill>
                <Pill $w={65} $accent>星期一</Pill>
              </PillRow>
              <TitleWrap><Title>充电桩数字大屏</Title></TitleWrap>
              <PillRow $end>
                <Pill $w={97}>14:56:41</Pill>
                <SelectBox $w={132}>
                  <Select aria-label="区域"><option>全部区域</option></Select>
                  <DeepChevron />
                </SelectBox>
                <PillButton $w={52}>刷新</PillButton>
                <PillButton $w={52}>全屏</PillButton>
              </PillRow>
            </ScreenHead>

            <Board>
              <Column $rows="minmax(0, 280fr) minmax(0, 236fr) minmax(0, 168fr)">
                <Panel title="资产总览">
                  <CardGrid $row={75} $gap={10}>
                    {assets.map(([name, value, unit]) => (
                      <Card key={name}>
                        <Label>{name}</Label>
                        <Value $size={20} $top={8}>{value}<Unit>{unit}</Unit></Value>
                      </Card>
                    ))}
                  </CardGrid>
                </Panel>
                <Panel title="桩型分布">
                  <ChartBox $h={190}><PileDonut /></ChartBox>
                </Panel>
                <Panel title="站点排行">
                  <RankScroll>
                    <RankList>
                      {["特来电特来电大连三...", "特来电青岛西海岸灵..."].map((name, i) => (
                        <RankItem key={name}>
                          <RankLine><Badge>{pad(i + 1)}</Badge>{name}<Ratio>2/50</Ratio></RankLine>
                          <Track><Fill style={{ width: "12%" }} /></Track>
                        </RankItem>
                      ))}
                    </RankList>
                    <Thumb />
                  </RankScroll>
                </Panel>
              </Column>

              <Column $rows="102px minmax(0, 342fr) minmax(0, 240fr)">
                <KpiRow>
                  {kpis.map(([name, value, unit, c, glow], i) => (
                    <Kpi key={name} $c={c} $glow={glow}>
                      <KpiIndex>{pad(i + 1)}</KpiIndex>
                      <Label>{name}</Label>
                      <KpiValue>{value}</KpiValue>
                      <Label $size={12}>{unit}</Label>
                    </Kpi>
                  ))}
                </KpiRow>
                <Panel title="开通城市分布">
                  <Stage>
                    <ChinaMap />
                    <StageStats>
                      <StageStat><Label $size={11}>开通城市</Label><Value $size={18} $top={0}>3</Value></StageStat>
                      <StageStat><Label $size={11}>电站数量</Label><Value $size={18} $top={0}>49<Unit>座</Unit></Value></StageStat>
                      <StageStat><Label $size={11}>电桩总数</Label><Value $size={18} $top={0}>870<Unit>台</Unit></Value></StageStat>
                    </StageStats>
                    <CityList>
                      {[["青岛", "869"], ["武汉", "0"], ["大连", "0"]].map(([name, n]) => (
                        <CityRow key={name}><Label $size={12}>{name}</Label><b>{n}</b><small>台</small></CityRow>
                      ))}
                    </CityList>
                    <StateList>
                      {states.map(([name, n, c]) => (
                        <StateRow key={name}><Dot $c={c} /><Label $size={12}>{name}</Label><b>{n}</b></StateRow>
                      ))}
                    </StateList>
                    <Zoomer>
                      <ZoomButton type="button">+</ZoomButton>
                      <ZoomButton type="button">−</ZoomButton>
                    </Zoomer>
                  </Stage>
                </Panel>
                <Pair>
                  <Panel title="月度电量"><ChartBox><MonthBars /></ChartBox></Panel>
                  <Panel title="24小时充电趋势"><ChartBox><HourTrend /></ChartBox></Panel>
                </Pair>
              </Column>

              <Column $rows="minmax(0, 212fr) minmax(0, 186fr) minmax(0, 176fr) minmax(0, 100fr)">
                <Panel title="设备状态">
                  <DonutArea><DeviceDonut /></DonutArea>
                  <CardGrid $row={36} $gap={8}>
                    {states.slice(0, 2).map(([name, n, c]) => (
                      <DeviceCard key={name}><BigDot $c={c} /><Label>{name}</Label><b>{n}</b></DeviceCard>
                    ))}
                  </CardGrid>
                </Panel>
                <Panel title="资金概览">
                  <CardGrid $row={68} $gap={10}>
                    {funds.map(([name, value]) => (
                      <FundCard key={name}><Label>{name}</Label><Value $size={16} $top={4}>{value}</Value></FundCard>
                    ))}
                  </CardGrid>
                </Panel>
                <Panel title="订单趋势">
                  <ChartBox $h={190}><OrderBars /></ChartBox>
                </Panel>
                <Panel title="实时监控">
                  <MonitorRow>
                    <b>城投特来电长生...</b>
                    <SelectBox $w={132}>
                      <Select aria-label="站点"><option>城投特来电...</option></Select>
                      <DeepChevron />
                    </SelectBox>
                  </MonitorRow>
                  <TagRow>
                    <Tag>充电中 0</Tag><Tag>空闲 2</Tag><Tag>已插枪 0</Tag><Tag>启动中 0</Tag>
                  </TagRow>
                </Panel>
              </Column>
            </Board>
          </Screen>
        </Main>
      </Shell>
    </>
  );
}
